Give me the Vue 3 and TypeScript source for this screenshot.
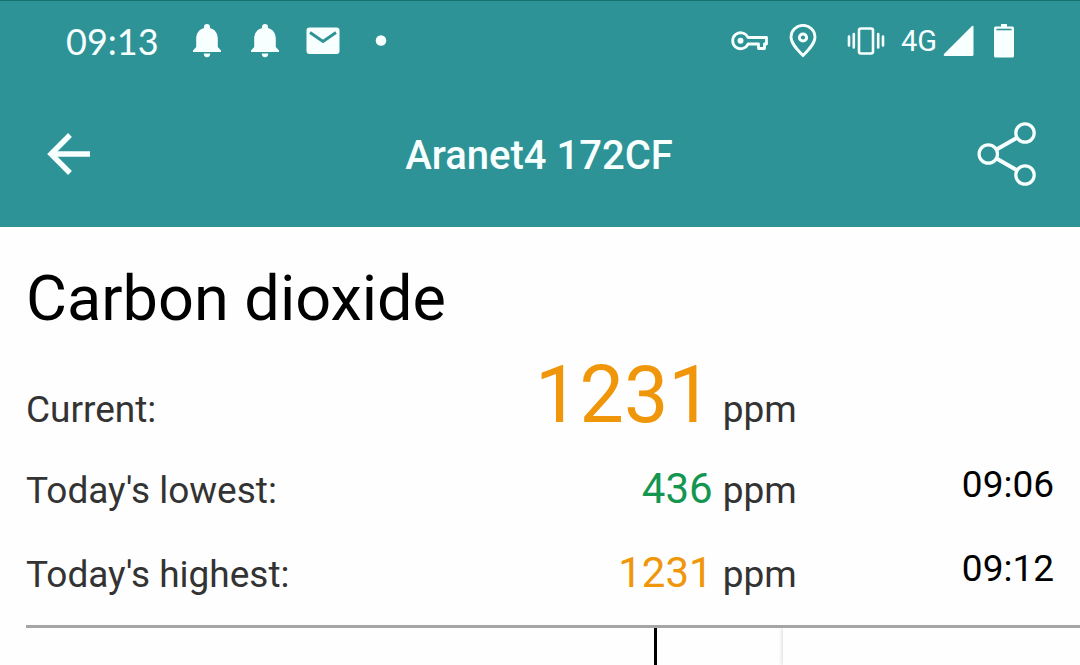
<script setup lang="ts">
interface Reading {
  label: string
  value: number
  tone: 'warn' | 'good'
  time: string
  large?: boolean
}

const device = 'Aranet4 172CF'
const readings: Reading[] = [
  { label: 'Current:', value: 1231, tone: 'warn', time: '', large: true },
  { label: "Today's lowest:", value: 436, tone: 'good', time: '09:06' },
  { label: "Today's highest:", value: 1231, tone: 'warn', time: '09:12' },
]
</script>

<template>
  <div class="screen">
    <header class="header">
      <div class="status">
        <div class="status-left">
          <span class="clock">09:13</span>
          <svg v-for="n in 2" :key="n" width="34" height="34" viewBox="0 0 34 34" fill="currentColor" aria-hidden="true">
            <path d="M17 0a3 3 0 0 1 3 3v1c5 1.400 7.800 5.500 7.800 10.500V23l3.200 3.500V28H3v-1.500L6.200 23v-8.500C6.200 9.500 9 5.400 14 4V3a3 3 0 0 1 3-3zM13.800 29.500h6.400a3.200 3.700 0 0 1-6.400 0z" />
          </svg>
          <svg width="34" height="34" viewBox="0 0 34 34" aria-hidden="true">
            <rect x="0.500" y="3.500" width="33" height="26.500" rx="3" fill="currentColor" />
            <path d="M4 8.500l13 9 13-9" fill="none" stroke="#2d9396" stroke-width="3" />
          </svg>
          <svg width="34" height="34" viewBox="0 0 34 34" aria-hidden="true">
            <circle cx="17" cy="16.500" r="5.300" fill="currentColor" />
          </svg>
        </div>
        <div class="status-right">
          <svg width="38" height="34" viewBox="0 0 38 34" fill="none" stroke="currentColor" stroke-width="2.800" stroke-linejoin="round" aria-hidden="true">
            <path d="M17 13.500H35.500v6.500h-2v4.500h-6V20H17a8 8 0 1 1 0-6.500z" />
            <circle cx="9.500" cy="16.800" r="3" fill="currentColor" stroke="none" />
          </svg>
          <svg class="pin" width="28" height="34" viewBox="0 0 28 34" fill="none" stroke="currentColor" aria-hidden="true">
            <path d="M14 31.500C7 24.500 2 19 2 13a12 11.700 0 0 1 24 0c0 6-5 11.500-12 18.500z" stroke-width="2.800" />
            <circle cx="14" cy="13.500" r="3.600" stroke-width="3" />
          </svg>
          <svg width="38" height="34" viewBox="0 0 38 34" fill="none" stroke="currentColor" stroke-width="2.600" stroke-linecap="round" aria-hidden="true">
            <rect x="12" y="4.500" width="14" height="25" rx="2" />
            <path d="M2 12.500v9M6.800 10v13.500M31.200 10v13.500M36 12.500v9" />
          </svg>
          <span class="network">4G</span>
          <svg class="signal" width="31" height="34" viewBox="0 0 31 34" fill="currentColor" aria-hidden="true">
            <path d="M29 2q1.500-.8 1.500 1V30.500q0 1.500-1.500 1.500H1.500Q0 31.500 1 30z" />
          </svg>
          <svg width="20" height="34" viewBox="0 0 20 34" aria-hidden="true">
            <path d="M7 0h6v2.500h5.500A1.500 1.500 0 0 1 20 4v28a1.500 1.500 0 0 1-1.500 1.500h-17A1.500 1.500 0 0 1 0 32V4a1.500 1.500 0 0 1 1.500-1.500H7z" fill="currentColor" />
            <path d="M2.500 5.500h15" stroke="#2d9396" stroke-width="1.600" />
          </svg>
        </div>
      </div>
      <div class="appbar">
        <button class="icon-button" type="button" aria-label="Back">
          <svg width="44" height="44" viewBox="0 0 44 44" fill="none" stroke="currentColor" stroke-width="5.400" aria-hidden="true">
            <path d="M43 22H5" />
            <path d="M23 3L4 22l19 19" />
          </svg>
        </button>
        <h1 class="title">{{ device }}</h1>
        <button class="icon-button share" type="button" aria-label="Share">
          <svg width="60" height="66" viewBox="0 0 60 66" fill="none" stroke="currentColor" stroke-width="3.200" aria-hidden="true">
            <circle cx="11.300" cy="33" r="9.200" />
            <circle cx="48" cy="12" r="9.200" />
            <circle cx="48" cy="54" r="9.200" />
            <path d="M19.500 28.500L40 16.700M19.500 37.500L40 49.300" stroke-width="4" />
          </svg>
        </button>
      </div>
    </header>

    <main class="content">
      <h2 class="heading">Carbon dioxide</h2>
      <table class="readings">
        <tbody>
          <tr v-for="r in readings" :key="r.label" :class="{ large: r.large }">
            <th scope="row">{{ r.label }}</th>
            <td class="value" :class="r.tone">{{ r.value }}</td>
            <td class="unit">ppm</td>
            <td class="time">{{ r.time }}</td>
          </tr>
        </tbody>
      </table>
      <div class="chart">
        <div class="marker"></div>
        <div class="gap"></div>
        <div class="panel"></div>
      </div>
    </main>
  </div>
</template>

<style>
body {
  margin: 0;
  background: #fefefe;
}
</style>

<style scoped>
.screen {
  display: flex;
  flex-direction: column;
  min-height: 100vh;
  background: #fefefe;
  color: #000;
  font-family: Roboto, "Liberation Sans", sans-serif;
}
.header {
  box-sizing: border-box;
  border-top: 1px solid #12706f;
  background: #2d9396;
  color: #f8ffff;
}
.status {
  display: flex;
  justify-content: space-between;
  align-items: center;
  height: 80px;
  padding: 0 66px;
}
.status-left,
.status-right {
  display: flex;
  align-items: center;
}
.status-left {
  gap: 24px;
}
.status-right {
  gap: 20px;
}
.clock {
  width: 100px;
  font-family: Lato, sans-serif;
  font-size: 36px;
  line-height: 40px;
}
.pin {
  margin-right: 10px;
}
.network {
  margin-left: -4px;
  font-size: 29px;
  line-height: 40px;
}
.signal {
  margin-left: -14px;
}
.appbar {
  display: grid;
  grid-template-columns: 1fr auto 1fr;
  align-items: center;
  height: 146px;
  padding: 0 43px 0 47px;
}
.icon-button {
  display: flex;
  justify-self: start;
  padding: 0;
  border: 0;
  background: none;
  color: inherit;
}
.share {
  justify-self: end;
}
.title {
  margin: 0;
  padding: 4px 6px 0 0;
  font-size: 40px;
  font-weight: 500;
  line-height: 48px;
}
.content {
  display: flex;
  flex: 1;
  flex-direction: column;
  padding: 34px 0 0 26px;
}
.heading {
  margin: 0 0 18px;
  font-size: 63px;
  font-weight: 400;
  line-height: 76px;
}
.readings {
  width: calc(100% - 26px);
  border-collapse: collapse;
  table-layout: fixed;
}
.readings th,
.readings td {
  padding: 18px 0 16px;
  line-height: 48px;
  vertical-align: baseline;
}
.readings .large th,
.readings .large td {
  padding: 0 0 12px;
}
.readings th {
  width: 38%;
  color: #333;
  font-size: 37px;
  font-weight: 400;
  text-align: left;
}
.readings .value {
  width: 28.8%;
  font-size: 42px;
  text-align: right;
}
.readings .large .value {
  font-size: 79px;
  line-height: 80px;
}
.readings .unit,
.readings .large .unit {
  padding-left: 10px;
  color: #333;
  font-size: 37px;
}
.readings .time {
  font-size: 37px;
  line-height: 40px;
  text-align: right;
  vertical-align: top;
}
.warn {
  color: #f0960a;
}
.good {
  color: #149650;
}
.chart {
  display: flex;
  flex: 1;
  min-height: 37px;
  margin-top: 10px;
  border-top: 3px solid #a5a5a5;
}
.marker {
  box-sizing: border-box;
  width: 59.9%;
  border-right: 3px solid #000;
}
.gap {
  width: 11.9%;
}
.panel {
  flex: 1;
  background: #fefefe;
  box-shadow: -1px 0 4px rgba(0, 0, 0, 0.15);
  clip-path: inset(0 0 0 -8px);
}
</style>
